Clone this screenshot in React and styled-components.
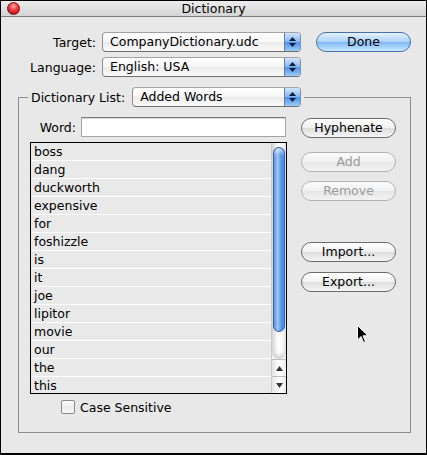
import React from 'react';
import styled, { createGlobalStyle } from 'styled-components';

const GlobalStyle = createGlobalStyle`
    html, body {
        margin: 0;
        padding: 0;
        background: #ffffff;
    }
    * { box-sizing: border-box; }
`;

const FONT = `"DejaVu Sans", "Noto Sans", sans-serif`;

const Window = styled.div`
    position: relative;
    width: 427px;
    height: 455px;
    border: 1px solid #000;
    border-bottom-width: 2px;
    background: #e8e8e8;
    font-family: ${FONT};
    font-size: 12.5px;
    color: #000;
    overflow: hidden;
`;

const TitleBar = styled.div`
    position: relative;
    height: 16px;
    border-bottom: 1px solid #7d7d7d;
    background: linear-gradient(#ececec, #d4d4d4);
    display: flex;
    align-items: center;
    justify-content: center;
    font-size: 12.5px;
    line-height: 15px;
`;

const CloseDot = styled.div`
    position: absolute;
    left: 6px;
    top: 1px;
    width: 13px;
    height: 13px;
    border-radius: 50%;
    border: 1px solid #7a1010;
    background: radial-gradient(circle at 50% 30%, #ffb0b0 0%, #f04040 40%, #b81010 85%);
`;

const Content = styled.div`
    padding: 15px 0 0 0;
    display: flex;
    flex-direction: column;
`;

const FormRow = styled.div`
    display: flex;
    align-items: center;
    height: 20px;
    margin-top: ${p => p.$top || 0}px;
`;

const Label = styled.div`
    width: ${p => p.$width}px;
    text-align: right;
    white-space: nowrap;
`;

const Popup = styled.div`
    display: flex;
    align-items: stretch;
    width: ${p => p.$width}px;
    height: 20px;
    margin-left: ${p => p.$left || 0}px;
    border: 1px solid #8e8e8e;
    border-top-color: #a2a2a2;
    border-bottom-color: #6f6f6f;
    border-radius: 4px;
    background: linear-gradient(#ffffff, #f6f6f6 50%, #ebebeb 51%, #fafafa);
    overflow: hidden;
`;

const PopupText = styled.div`
    flex: 1;
    padding-left: 7px;
    line-height: 18px;
    white-space: nowrap;
`;

const PopupArrows = styled.div`
    width: 16px;
    border-left: 1px solid #5b7fb5;
    background: linear-gradient(#d3e6fb, #86b7f2 48%, #4d92e8 52%, #9cccf8);
    display: flex;
    flex-direction: column;
    align-items: center;
    justify-content: center;
    gap: 2px;
`;

const DoneButton = styled.div`
    width: 95px;
    height: 20px;
    margin-left: 15px;
    border: 1px solid #4a6ea6;
    border-radius: 10px;
    background: linear-gradient(#e6f2fe, #acd2f8 48%, #82b9f3 52%, #c8e8ff);
    display: flex;
    align-items: center;
    justify-content: center;
    line-height: 18px;
`;

const Group = styled.fieldset`
    margin: 10px 0 0 17px;
    width: 393px;
    height: 346px;
    border: 1px solid #8d8d8d;
    padding: 10px 13px 0 11px;
    min-width: 0;
`;

const Legend = styled.legend`
    display: flex;
    align-items: center;
    padding: 0 3px;
    margin-left: -2px;
    height: 20px;
`;

const GroupBody = styled.div`
    display: flex;
    gap: 14px;
`;

const LeftColumn = styled.div`
    width: 257px;
    display: flex;
    flex-direction: column;
`;

const RightColumn = styled.div`
    width: 95px;
    display: flex;
    flex-direction: column;
    padding-top: 1px;
`;

const WordRow = styled.div`
    display: flex;
    align-items: center;
    justify-content: flex-end;
    gap: 5px;
    height: 20px;
    padding-right: 1px;
`;

const TextField = styled.div`
    width: 205px;
    height: 20px;
    background: #fff;
    border: 1px solid #a5a5a5;
    border-top-color: #7c7c7c;
    box-shadow: inset 0 1px 0 #d8d8d8;
`;

const List = styled.div`
    margin-top: 5px;
    height: 252px;
    border: 1px solid #000;
    display: flex;
    overflow: hidden;
    background: #e9e9e9;
`;

const Rows = styled.div`
    flex: 1;
    display: flex;
    flex-direction: column;
`;

const Row = styled.div`
    flex: none;
    height: 18px;
    line-height: 18px;
    padding-left: 3px;
    border-bottom: 1px solid #ffffff;
`;

const Scrollbar = styled.div`
    width: 15px;
    display: flex;
    flex-direction: column;
    border-left: 1px solid #c9c9c9;
    background: #f4f4f4;
`;

const Track = styled.div`
    flex: 1;
    padding: 4px 1px 0 1px;
    border-bottom-left-radius: 7px;
    border-bottom-right-radius: 7px;
    background: linear-gradient(90deg, #dcdcdc, #ffffff 45%, #f0f0f0);
    box-shadow: inset 0 -3px 4px #d0d0d0;
`;

const Thumb = styled.div`
    height: 185px;
    border-radius: 7px;
    border: 1px solid #2d5fb3;
    background: linear-gradient(90deg, #3f7fe0, #9fcaf8 35%, #6aa8f0 60%, #2f6fd6);
    box-shadow: inset 0 4px 3px rgba(255, 255, 255, 0.5);
`;

const ArrowButton = styled.div`
    height: 17px;
    display: flex;
    align-items: center;
    justify-content: center;
    border-top: 1px solid #bdbdbd;
    background: linear-gradient(90deg, #e4e4e4, #ffffff 50%, #ececec);
`;

const CheckRow = styled.div`
    display: flex;
    align-items: center;
    gap: 5px;
    margin: 6px 0 0 31px;
    height: 14px;
`;

const CheckBox = styled.div`
    width: 14px;
    height: 14px;
    border: 1px solid #8a8a8a;
    border-radius: 2px;
    background: linear-gradient(#ffffff, #ececec 50%, #f8f8f8);
`;

const PushButton = styled.div`
    height: 20px;
    margin-top: ${p => p.$top || 0}px;
    border: 1px solid ${p => (p.$disabled ? '#b3b3b3' : '#6c6c6c')};
    border-radius: 10px;
    background: ${p => (p.$disabled
        ? 'linear-gradient(#fbfbfb, #f0f0f0 50%, #e6e6e6 52%, #f3f3f3)'
        : 'linear-gradient(#ffffff, #f1f1f1 50%, #dedede 52%, #f6f6f6)')};
    color: ${p => (p.$disabled ? '#9a9a9a' : '#000')};
    display: flex;
    align-items: center;
    justify-content: center;
    line-height: 18px;
`;

const Cursor = styled.svg`
    position: absolute;
    left: 356px;
    top: 324px;
`;

const StepperArrows = () => (
    <PopupArrows>
        <svg width="7" height="4" viewBox="0 0 7 4"><path d="M3.5 0 L7 4 L0 4 Z" fill="#0d1e3a" /></svg>
        <svg width="7" height="4" viewBox="0 0 7 4"><path d="M0 0 L7 0 L3.5 4 Z" fill="#0d1e3a" /></svg>
    </PopupArrows>
);

const words = [
    'boss', 'dang', 'duckworth', 'expensive', 'for', 'foshizzle', 'is',
    'it', 'joe', 'lipitor', 'movie', 'our', 'the', 'this',
];

const App = () => {
    return (
        <>
            <GlobalStyle />
            <Window>
                <TitleBar>
                    <CloseDot />
                    Dictionary
                </TitleBar>
                <Content>
                    <FormRow>
                        <Label $width={95}>Target:</Label>
                        <Popup $width={199} $left={6}>
                            <PopupText>CompanyDictionary.udc</PopupText>
                            <StepperArrows />
                        </Popup>
                        <DoneButton>Done</DoneButton>
                    </FormRow>
                    <FormRow $top={5}>
                        <Label $width={95}>Language:</Label>
                        <Popup $width={199} $left={6}>
                            <PopupText>English: USA</PopupText>
                            <StepperArrows />
                        </Popup>
                    </FormRow>

                    <Group>
                        <Legend>
                            Dictionary List:
                            <Popup $width={169} $left={7}>
                                <PopupText>Added Words</PopupText>
                                <StepperArrows />
                            </Popup>
                        </Legend>
                        <GroupBody>
                            <LeftColumn>
                                <WordRow>
                                    <span>Word:</span>
                                    <TextField />
                                </WordRow>
                                <List>
                                    <Rows>
                                        {words.map(w => <Row key={w}>{w}</Row>)}
                                    </Rows>
                                    <Scrollbar>
                                        <Track>
                                            <Thumb />
                                        </Track>
                                        <ArrowButton>
                                            <svg width="7" height="5" viewBox="0 0 7 5"><path d="M3.5 0 L7 5 L0 5 Z" fill="#333" /></svg>
                                        </ArrowButton>
                                        <ArrowButton>
                                            <svg width="7" height="5" viewBox="0 0 7 5"><path d="M0 0 L7 0 L3.5 5 Z" fill="#333" /></svg>
                                        </ArrowButton>
                                    </Scrollbar>
                                </List>
                                <CheckRow>
                                    <CheckBox />
                                    <span>Case Sensitive</span>
                                </CheckRow>
                            </LeftColumn>
                            <RightColumn>
                                <PushButton>Hyphenate</PushButton>
                                <PushButton $top={14} $disabled>Add</PushButton>
                                <PushButton $top={9} $disabled>Remove</PushButton>
                                <PushButton $top={41}>Import...</PushButton>
                                <PushButton $top={10}>Export...</PushButton>
                            </RightColumn>
                        </GroupBody>
                    </Group>
                </Content>
                <Cursor width="12" height="19" viewBox="0 0 12 19">
                    <path d="M0.5 0.5 L0.5 15 L4 11.5 L6.5 17.5 L8.5 16.6 L6 10.8 L11 10.8 Z" fill="#000" stroke="#fff" strokeWidth="1" />
                </Cursor>
            </Window>
        </>
    );
};

export default App;
